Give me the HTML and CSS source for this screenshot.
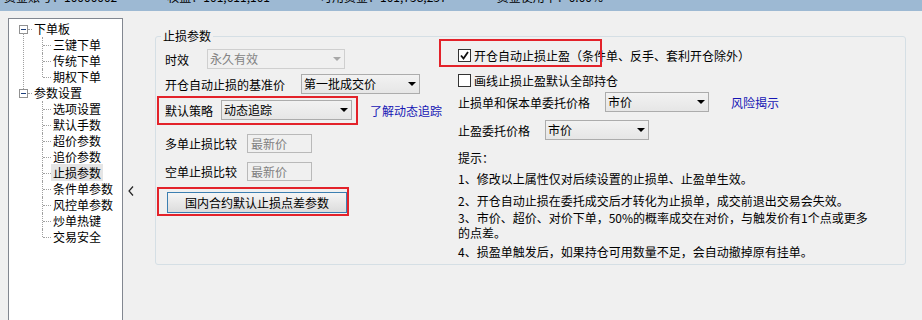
FILE: index.html
```html
<!DOCTYPE html>
<html lang="zh-CN">
<head>
    <meta charset="UTF-8">
    <title>止损参数</title>
    <link rel="stylesheet" href="styles.css">
</head>
<body>
    <div class="titlebar">
        <span>资金账号：10000002 &nbsp; 权益：101,611,101 &nbsp; 可用资金：101,758,237 &nbsp; 资金使用率：0.00%</span>
    </div>

    <div class="main">
        <!-- settings tree -->
        <div class="tree">
            <ul class="tree-root">
                <li class="node">
                    <span class="toggle"></span><span class="stub"></span><span class="label">下单板</span>
                    <ul class="tree-children">
                        <li><span class="label">三键下单</span></li>
                        <li><span class="label">传统下单</span></li>
                        <li class="last"><span class="label">期权下单</span></li>
                    </ul>
                </li>
                <li class="node last">
                    <span class="toggle"></span><span class="stub"></span><span class="label">参数设置</span>
                    <ul class="tree-children">
                        <li><span class="label">选项设置</span></li>
                        <li><span class="label">默认手数</span></li>
                        <li><span class="label">超价参数</span></li>
                        <li><span class="label">追价参数</span></li>
                        <li><span class="label selected">止损参数</span></li>
                        <li><span class="label">条件单参数</span></li>
                        <li><span class="label">风控单参数</span></li>
                        <li><span class="label">炒单热键</span></li>
                        <li class="last"><span class="label">交易安全</span></li>
                    </ul>
                </li>
            </ul>
        </div>

        <div class="splitter">
            <svg width="6" height="10" viewBox="0 0 6 10"><polyline points="5,0.5 1,5 5,9.5" fill="none" stroke="#222" stroke-width="1.2"/></svg>
        </div>

        <!-- stop-loss group -->
        <fieldset class="group">
            <legend>止损参数</legend>
            <div class="cols">
                <div class="lcol">
                    <div class="row row-validity">
                        <span class="lbl lbl-short">时效</span>
                        <div class="combo combo-validity disabled"><span>永久有效</span><i class="arrow"></i></div>
                    </div>
                    <div class="row row-base">
                        <span class="lbl lbl-base">开仓自动止损的基准价</span>
                        <div class="combo combo-base"><span>第一批成交价</span><i class="arrow"></i></div>
                    </div>
                    <div class="row row-strategy">
                        <div class="mark mark-strategy">
                            <span class="lbl lbl-strategy">默认策略</span>
                            <div class="combo combo-strategy"><span>动态追踪</span><i class="arrow"></i></div>
                        </div>
                        <a class="link link-trail" href="#">了解动态追踪</a>
                    </div>
                    <div class="row row-compare">
                        <span class="lbl lbl-compare">多单止损比较</span>
                        <div class="field">最新价</div>
                    </div>
                    <div class="row row-compare2">
                        <span class="lbl lbl-compare">空单止损比较</span>
                        <div class="field">最新价</div>
                    </div>
                    <div class="row row-button">
                        <div class="mark mark-button">
                            <button class="btn" type="button">国内合约默认止损点差参数</button>
                        </div>
                    </div>
                </div>

                <div class="rcol">
                    <div class="check-row check-first">
                        <span class="check checked">
                            <svg width="11" height="11" viewBox="0 0 11 11"><polyline points="2,5.5 4.5,8.5 9,2" fill="none" stroke="#111" stroke-width="1.8"/></svg>
                        </span>
                        <span>开仓自动止损止盈（条件单、反手、套利开仓除外）</span>
                        <span class="mark-overlay"></span>
                    </div>
                    <div class="check-row check-second">
                        <span class="check"></span>
                        <span>画线止损止盈默认全部持仓</span>
                    </div>
                    <div class="row row-stop">
                        <span class="lbl lbl-stop">止损单和保本单委托价格</span>
                        <div class="combo combo-stop"><span>市价</span><i class="arrow"></i></div>
                        <a class="link link-risk" href="#">风险揭示</a>
                    </div>
                    <div class="row row-profit">
                        <span class="lbl lbl-profit">止盈委托价格</span>
                        <div class="combo combo-profit"><span>市价</span><i class="arrow"></i></div>
                    </div>
                    <div class="tips-title">提示：</div>
                    <p class="tip tip-1">1、修改以上属性仅对后续设置的止损单、止盈单生效。</p>
                    <p class="tip tip-2">2、开仓自动止损在委托成交后才转化为止损单，成交前退出交易会失效。</p>
                    <p class="tip tip-3">3、市价、超价、对价下单，50%的概率成交在对价，与触发价有1个点或更多<br>的点差。</p>
                    <p class="tip tip-4">4、损盈单触发后，如果持仓可用数量不足，会自动撤掉原有挂单。</p>
                </div>
            </div>
        </fieldset>
    </div>
</body>
</html>
```

FILE: styles.css
```css
* {
    box-sizing: border-box;
    margin: 0;
    padding: 0;
}

body {
    font-family: "Noto Sans CJK SC", "Liberation Sans", sans-serif;
    font-size: 12px;
    background: #f0f0f0;
    color: #000;
    width: 922px;
    height: 320px;
    overflow: hidden;
}

.titlebar {
    height: 11px;
    background: #9db9d3;
    overflow: hidden;
    padding-left: 4px;
    white-space: nowrap;
}

.titlebar span {
    display: block;
    line-height: 12px;
    margin-top: -9px;
    word-spacing: 14px;
}

.main {
    display: flex;
    align-items: flex-start;
    padding: 7px 0 0 8px;
}

/* tree */
.tree {
    width: 115px;
    height: 310px;
    background: #fff;
    border: 1px solid #828790;
    padding-top: 2px;
}

.tree ul {
    list-style: none;
}

.tree li {
    line-height: 16px;
    white-space: nowrap;
}

.node {
    position: relative;
}

.node:not(.last)::before {
    content: "";
    position: absolute;
    left: 14px;
    top: 12px;
    bottom: -4px;
    border-left: 1px dotted #a0a0a0;
}

.toggle {
    display: inline-block;
    vertical-align: middle;
    width: 9px;
    height: 9px;
    margin: -2px 0 0 10px;
    border: 1px solid #919191;
    background: linear-gradient(#1c3f7c, #1c3f7c) center / 5px 1px no-repeat, #fff;
}

.stub {
    display: inline-block;
    vertical-align: middle;
    width: 4px;
    margin-top: -2px;
    border-top: 1px dotted #a0a0a0;
}

.label {
    padding: 0 2px;
}

.label.selected {
    background: #e5e5e5;
}

.tree-children {
    margin-left: 33px;
}

.tree-children li {
    position: relative;
    padding-left: 9px;
}

.tree-children li::before {
    content: "";
    position: absolute;
    left: 0;
    top: 0;
    height: 100%;
    border-left: 1px dotted #a0a0a0;
}

.tree-children li.last::before {
    height: 8px;
}

.tree-children li::after {
    content: "";
    position: absolute;
    left: 1px;
    top: 8px;
    width: 8px;
    border-top: 1px dotted #a0a0a0;
}

.splitter {
    width: 32px;
    padding: 168px 0 0 5px;
}

.splitter svg {
    display: block;
}

/* group box */
.group {
    width: 751px;
    margin-top: 10px;
    border: 1px solid #d5dfe5;
    border-radius: 3px;
    padding: 0 10px 5px 9px;
}

.group legend {
    line-height: 16px;
    padding: 0 2px;
    margin-left: -4px;
}

.cols {
    display: grid;
    grid-template-columns: 293px 1fr;
}

.row {
    display: flex;
    align-items: center;
    white-space: nowrap;
}

.lbl-short { width: 42px; }
.lbl-base { width: 136px; }
.lbl-strategy { width: 56px; }
.lbl-compare { width: 82px; }
.lbl-stop { width: 147px; }
.lbl-profit { width: 87px; }

.row-validity { margin-top: 5px; }
.row-base { margin-top: 5px; }
.row-strategy { margin-top: 2px; }
.row-compare { margin-top: 9px; }
.row-compare2 { margin-top: 9px; }
.row-button { margin-top: 6px; }

/* red annotation boxes */
.mark {
    display: flex;
    align-items: center;
    border: 2px solid #e3222a;
    margin-left: -8px;
}

.mark-strategy {
    padding: 2px 4px 3px 6px;
}

.mark-button {
    padding: 3px 0 1px 8px;
}

.mark-overlay {
    position: absolute;
    left: -19px;
    top: -7px;
    width: 163px;
    height: 28px;
    border: 2px solid #e3222a;
    pointer-events: none;
}

/* combo boxes */
.combo {
    display: flex;
    align-items: center;
    height: 20px;
    border: 1px solid #acacac;
    background: linear-gradient(#f2f2f2, #e6e6e6);
    padding: 0 3px 0 2px;
}

.combo span {
    flex: 1;
    line-height: 18px;
}

.combo .arrow {
    width: 0;
    height: 0;
    border-left: 4px solid transparent;
    border-right: 4px solid transparent;
    border-top: 4px solid #000;
}

.combo.disabled {
    border-color: #cfcfcf;
    background: #f0f0f0;
    color: #838383;
}

.combo.disabled .arrow {
    border-top-color: #a8a8a8;
}

.combo-validity { width: 138px; }
.combo-base { width: 119px; }
.combo-strategy { width: 131px; }
.combo-stop { width: 104px; }
.combo-profit { width: 104px; }

.field {
    width: 65px;
    height: 19px;
    line-height: 17px;
    border: 1px solid #b9b9b9;
    background: #f0f0f0;
    color: #808080;
    padding-left: 3px;
}

.btn {
    width: 180px;
    height: 21px;
    border: 1px solid #3c7fb1;
    background: linear-gradient(#f5f5f5, #dcdcdc);
    font-family: inherit;
    font-size: 12px;
    color: #000;
}

.link {
    color: #1616b4;
    text-decoration: none;
}

.link-trail { margin-left: 12px; }
.link-risk { margin-left: 22px; }

/* right column */
.check-row {
    position: relative;
    display: flex;
    align-items: center;
    height: 18px;
    white-space: nowrap;
}

.check-first { margin-top: 2px; }
.check-second { margin-top: 7px; }

.check {
    display: inline-flex;
    align-items: center;
    justify-content: center;
    width: 13px;
    height: 13px;
    border: 1px solid #333;
    background: #fff;
    margin-right: 3px;
}

.row-stop { margin-top: 3px; }
.row-profit { margin-top: 8px; }

.tips-title {
    margin-top: 10px;
    line-height: 16px;
}

.tip {
    line-height: 15px;
    white-space: nowrap;
}

.tip-1 { margin-top: 5px; }
.tip-2 { margin-top: 7px; }
.tip-3 { margin-top: 2px; }
.tip-4 { margin-top: 4px; }
```
